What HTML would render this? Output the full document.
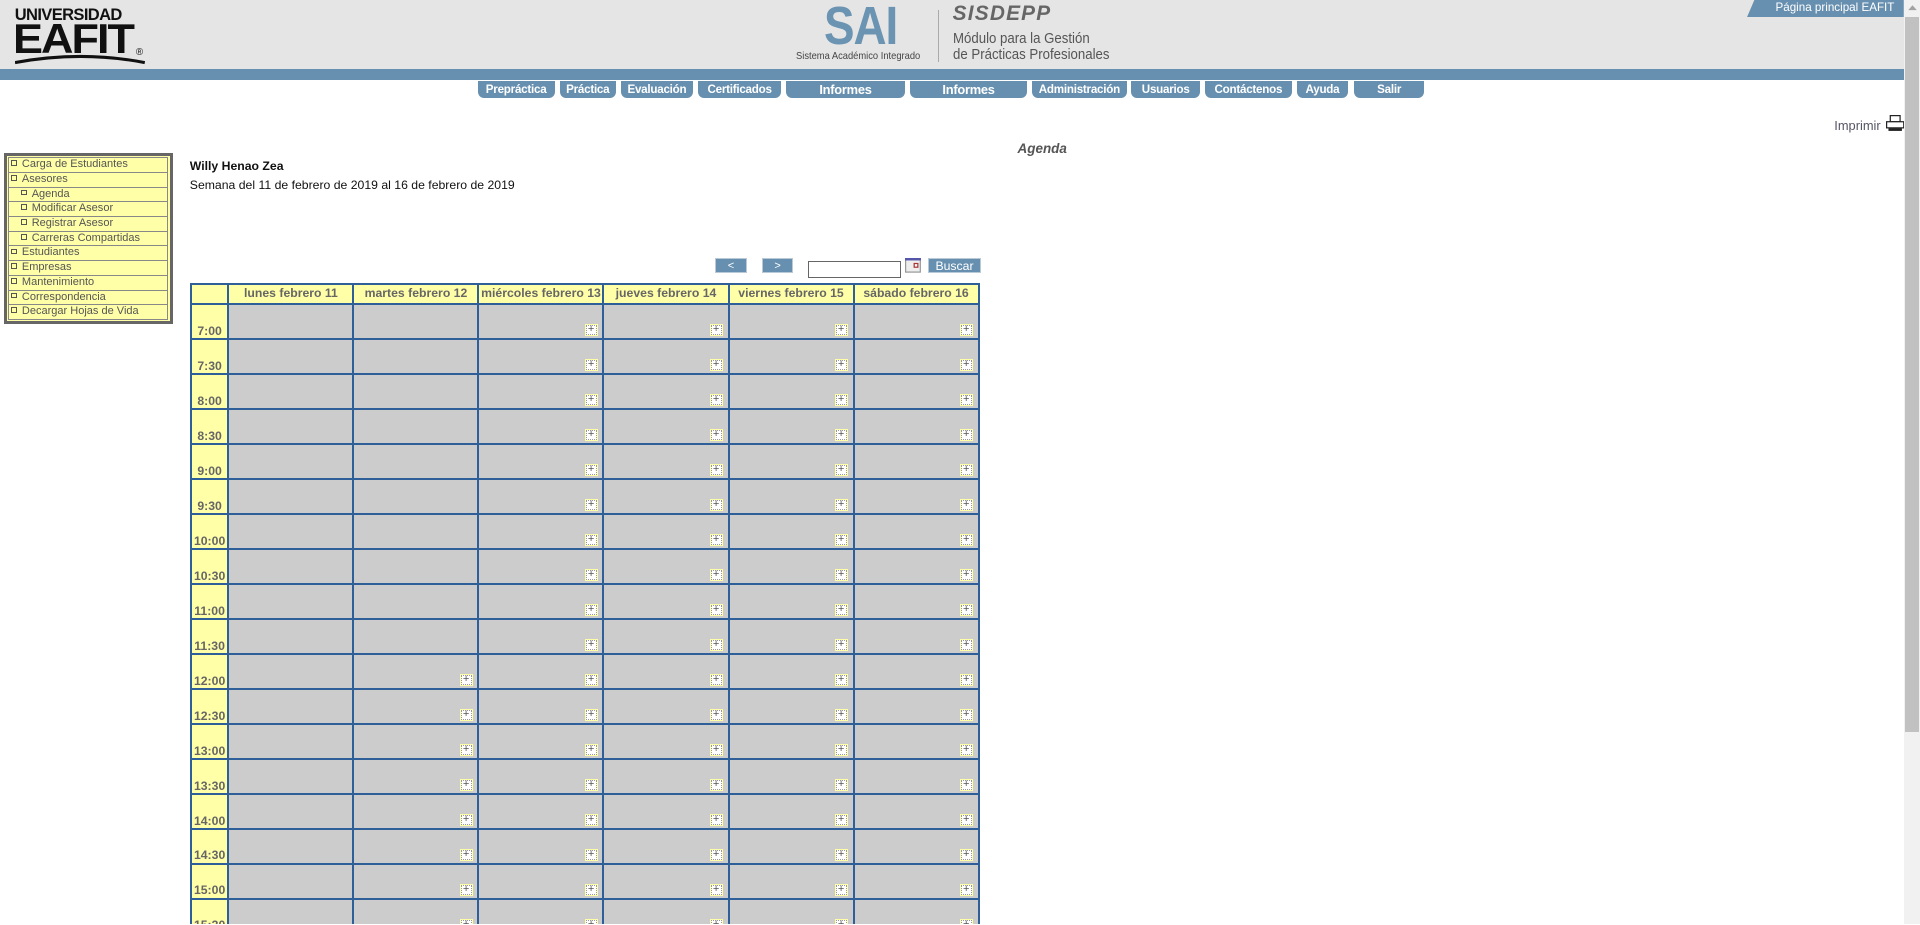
<!DOCTYPE html>
<html><head><meta charset="utf-8">
<style>
html,body{margin:0;padding:0;overflow:hidden;width:1920px;height:925px;background:#fff}
#w{zoom:1.22449;position:relative;width:1568px;height:755px;font-family:"Liberation Sans",Arial,sans-serif;overflow:hidden}
.a{position:absolute}
.hdr{left:0;top:0;width:1555px;height:56px;background:#e5e5e5}
.bar{left:0;top:56px;width:1555px;height:9px;background:#6790b0}
.tab{position:absolute;top:66px;height:14px;background:#6790b0;color:#fff;font-size:9.5px;font-weight:bold;text-align:center;line-height:14px;border-radius:0 0 5px 5px;letter-spacing:-0.2px}
.menu{left:3px;top:125px;width:131px;border:3px solid #666;background:#ffffa8;padding:1px}
.menu div{height:11.2px;border:1px solid #888;border-top:0;font-size:9px;color:#555;line-height:11px;padding-left:2px;white-space:nowrap}
.menu div:first-child{border-top:1px solid #888}
.menu span.b{display:inline-block;width:3px;height:3px;border:1px solid #555;margin-right:4px;vertical-align:1px}
table.g{position:absolute;left:155px;top:231px;border-spacing:2px;background:#2e5f99;table-layout:fixed;width:645px}
table.g td{padding:0;background:#ccc;height:26.94px;position:relative;overflow:hidden;line-height:11px}
table.g tr.h td{background:#ffffa8;height:15px;font-size:10px;font-weight:bold;color:#666;text-align:center;white-space:nowrap}
table.g td.t{background:#ffffa8;font-size:10px;font-weight:bold;color:#666;text-align:center;vertical-align:bottom}
i.p{position:absolute;right:4px;bottom:2px;width:9px;height:8px;background:#fff;border:1px solid #ffffa8;font-style:normal;font-size:9px;line-height:8px;text-align:center;color:#555;outline:1px dotted #999;outline-offset:-2px}
.btn{position:absolute;top:211px;height:12px;background:#6790b0;color:#fff;font-size:9px;text-align:center;line-height:12px;border:1px solid #b9c9d6;box-sizing:border-box}
</style></head><body><div id="w">
<div class="a hdr"></div>
<div class="a" style="left:12px;top:4px;font-size:13.5px;font-weight:900;letter-spacing:-0.5px;color:#111">UNIVERSIDAD</div>
<div class="a" style="left:11px;top:15px;font-size:34px;font-weight:900;letter-spacing:-1.5px;color:#111;transform:scaleX(1.08);transform-origin:left;line-height:34px">EAFIT</div>
<div class="a" style="left:111px;top:38px;font-size:8px;color:#111">®</div>
<svg class="a" style="left:12px;top:44px" width="108" height="10"><path d="M0 7 Q54 -3 106 7" stroke="#111" stroke-width="2.5" fill="none"/></svg>
<div class="a" style="left:673px;top:-4px;font-size:44px;font-weight:bold;color:#6b93b2;letter-spacing:-1px;transform:scaleX(0.85);transform-origin:left">SAI</div>
<div class="a" style="left:650px;top:42px;font-size:8.5px;color:#444;transform:scaleX(0.9);transform-origin:left;white-space:nowrap">Sistema Académico Integrado</div>
<div class="a" style="left:766px;top:8px;width:1px;height:43px;background:#aaa"></div>
<div class="a" style="left:778px;top:2px;font-size:17px;font-style:italic;font-weight:bold;color:#666;letter-spacing:1px">SISDEPP</div>
<div class="a" style="left:778px;top:26px;font-size:12px;color:#555;line-height:13px;white-space:nowrap;transform:scaleX(0.9);transform-origin:left">Módulo para la Gestión<br>de Prácticas Profesionales</div>
<svg class="a" style="left:1427px;top:0" width="128" height="14"><path d="M6 0H128V14H0Z" fill="#6790b0"/></svg>
<div class="a" style="left:1450px;top:1px;font-size:9.5px;color:#fff;white-space:nowrap">Página principal EAFIT</div>
<div class="a bar"></div>
<div class="tab" style="left:390px;width:63px">Prepráctica</div>
<div class="tab" style="left:457px;width:46px">Práctica</div>
<div class="tab" style="left:507px;width:59px">Evaluación</div>
<div class="tab" style="left:570px;width:68px">Certificados</div>
<div class="tab" style="left:642px;width:97px;font-size:10.5px">Informes</div>
<div class="tab" style="left:743px;width:96px;font-size:10.5px">Informes</div>
<div class="tab" style="left:843px;width:77px">Administración</div>
<div class="tab" style="left:924px;width:56px">Usuarios</div>
<div class="tab" style="left:984px;width:71px">Contáctenos</div>
<div class="tab" style="left:1059px;width:42px">Ayuda</div>
<div class="tab" style="left:1106px;width:57px">Salir</div>
<div class="a" style="left:1498px;top:96px;font-size:10.5px;color:#556">Imprimir</div>
<svg class="a" style="left:1540px;top:94px" width="15" height="14"><rect x="3.5" y="0.5" width="8" height="5" fill="#fff" stroke="#222"/><rect x="0.5" y="5.5" width="14" height="5" fill="#fff" stroke="#222"/><rect x="2" y="11" width="11" height="2" fill="#222"/></svg>
<div class="a" style="left:831px;top:115px;font-size:11px;font-weight:bold;font-style:italic;color:#555">Agenda</div>
<div class="a menu">
<div><span class="b"></span>Carga de Estudiantes</div>
<div><span class="b"></span>Asesores</div>
<div style="padding-left:10px"><span class="b"></span>Agenda</div>
<div style="padding-left:10px"><span class="b"></span>Modificar Asesor</div>
<div style="padding-left:10px"><span class="b"></span>Registrar Asesor</div>
<div style="padding-left:10px"><span class="b"></span>Carreras Compartidas</div>
<div><span class="b"></span>Estudiantes</div>
<div><span class="b"></span>Empresas</div>
<div><span class="b"></span>Mantenimiento</div>
<div><span class="b"></span>Correspondencia</div>
<div><span class="b"></span>Decargar Hojas de Vida</div>
</div>
<div class="a" style="left:155px;top:130px;font-size:10px;font-weight:bold;color:#111">Willy Henao Zea</div>
<div class="a" style="left:155px;top:145px;font-size:10px;color:#111;white-space:nowrap">Semana del 11 de febrero de 2019 al 16 de febrero de 2019</div>
<div class="btn" style="left:584px;width:26px">&lt;</div>
<div class="btn" style="left:622px;width:26px">&gt;</div>
<div class="a" style="left:660px;top:213px;width:76px;height:14px;border:1px solid #666;box-sizing:border-box;background:#fff"></div>
<svg class="a" style="left:739px;top:211px" width="13" height="12"><rect x="0.5" y="0.5" width="12" height="11" fill="#eee" stroke="#999"/><rect x="0" y="0" width="13" height="2" fill="#55a"/><rect x="7.5" y="4.5" width="3" height="3" fill="#fff" stroke="#a33"/></svg>
<div class="btn" style="left:758px;width:43px;font-size:10px">Buscar</div>
<table class="g">
<colgroup><col style="width:29px"><col style="width:100px"><col style="width:100px"><col style="width:100px"><col style="width:100px"><col style="width:100px"><col style="width:100px"></colgroup>
<tr class="h"><td class="t" style="background:#ffffa8"></td><td>lunes febrero 11</td><td>martes febrero 12</td><td>miércoles febrero 13</td><td>jueves febrero 14</td><td>viernes febrero 15</td><td>sábado febrero 16</td></tr>
<tr><td class="t">7:00</td><td></td><td></td><td><i class="p">+</i></td><td><i class="p">+</i></td><td><i class="p">+</i></td><td><i class="p">+</i></td></tr>
<tr><td class="t">7:30</td><td></td><td></td><td><i class="p">+</i></td><td><i class="p">+</i></td><td><i class="p">+</i></td><td><i class="p">+</i></td></tr>
<tr><td class="t">8:00</td><td></td><td></td><td><i class="p">+</i></td><td><i class="p">+</i></td><td><i class="p">+</i></td><td><i class="p">+</i></td></tr>
<tr><td class="t">8:30</td><td></td><td></td><td><i class="p">+</i></td><td><i class="p">+</i></td><td><i class="p">+</i></td><td><i class="p">+</i></td></tr>
<tr><td class="t">9:00</td><td></td><td></td><td><i class="p">+</i></td><td><i class="p">+</i></td><td><i class="p">+</i></td><td><i class="p">+</i></td></tr>
<tr><td class="t">9:30</td><td></td><td></td><td><i class="p">+</i></td><td><i class="p">+</i></td><td><i class="p">+</i></td><td><i class="p">+</i></td></tr>
<tr><td class="t">10:00</td><td></td><td></td><td><i class="p">+</i></td><td><i class="p">+</i></td><td><i class="p">+</i></td><td><i class="p">+</i></td></tr>
<tr><td class="t">10:30</td><td></td><td></td><td><i class="p">+</i></td><td><i class="p">+</i></td><td><i class="p">+</i></td><td><i class="p">+</i></td></tr>
<tr><td class="t">11:00</td><td></td><td></td><td><i class="p">+</i></td><td><i class="p">+</i></td><td><i class="p">+</i></td><td><i class="p">+</i></td></tr>
<tr><td class="t">11:30</td><td></td><td></td><td><i class="p">+</i></td><td><i class="p">+</i></td><td><i class="p">+</i></td><td><i class="p">+</i></td></tr>
<tr><td class="t">12:00</td><td></td><td><i class="p">+</i></td><td><i class="p">+</i></td><td><i class="p">+</i></td><td><i class="p">+</i></td><td><i class="p">+</i></td></tr>
<tr><td class="t">12:30</td><td></td><td><i class="p">+</i></td><td><i class="p">+</i></td><td><i class="p">+</i></td><td><i class="p">+</i></td><td><i class="p">+</i></td></tr>
<tr><td class="t">13:00</td><td></td><td><i class="p">+</i></td><td><i class="p">+</i></td><td><i class="p">+</i></td><td><i class="p">+</i></td><td><i class="p">+</i></td></tr>
<tr><td class="t">13:30</td><td></td><td><i class="p">+</i></td><td><i class="p">+</i></td><td><i class="p">+</i></td><td><i class="p">+</i></td><td><i class="p">+</i></td></tr>
<tr><td class="t">14:00</td><td></td><td><i class="p">+</i></td><td><i class="p">+</i></td><td><i class="p">+</i></td><td><i class="p">+</i></td><td><i class="p">+</i></td></tr>
<tr><td class="t">14:30</td><td></td><td><i class="p">+</i></td><td><i class="p">+</i></td><td><i class="p">+</i></td><td><i class="p">+</i></td><td><i class="p">+</i></td></tr>
<tr><td class="t">15:00</td><td></td><td><i class="p">+</i></td><td><i class="p">+</i></td><td><i class="p">+</i></td><td><i class="p">+</i></td><td><i class="p">+</i></td></tr>
<tr><td class="t">15:30</td><td></td><td><i class="p">+</i></td><td><i class="p">+</i></td><td><i class="p">+</i></td><td><i class="p">+</i></td><td><i class="p">+</i></td></tr>
</table>
<div class="a" style="left:1555px;top:0;width:13px;height:755px;background:#f1f1f1"></div>
<div class="a" style="left:1556px;top:14px;width:11px;height:584px;background:#c1c1c1"></div>
<svg class="a" style="left:1557px;top:3px" width="9" height="6"><path d="M1 5L4.5 1L8 5Z" fill="#a3a3a3"/></svg>
</div></body></html>
